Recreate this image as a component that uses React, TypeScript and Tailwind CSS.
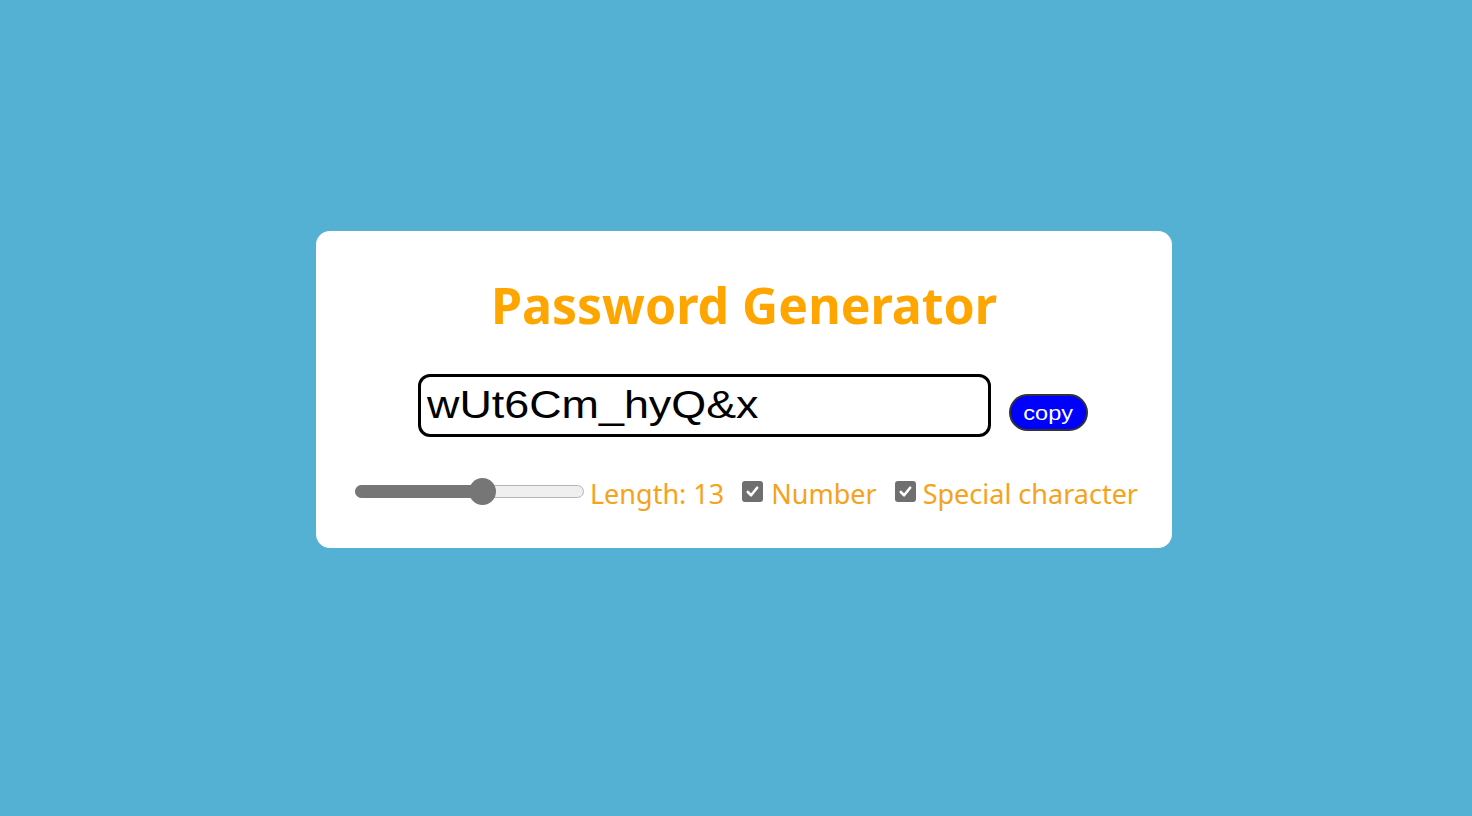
import React from "react";

function Check() {
  return (
    <span className="inline-flex h-[21px] w-[21px] items-center justify-center rounded-[3px] bg-[#6f6f6f]">
      <svg width="15" height="15" viewBox="0 0 16 16">
        <path d="M3 8.5 L6.5 12 L13 4" fill="none" stroke="white" strokeWidth="2.8" strokeLinecap="round" strokeLinejoin="round" />
      </svg>
    </span>
  );
}

export default function App() {
  return (
    <div className="min-h-[816px] w-full bg-[#54b1d3] pt-[231px] pl-[316px]">
      <div className="flex h-[317px] w-[856px] flex-col items-center rounded-[14px] bg-white">
        <h1
          className="mt-[39px] text-[50px] font-bold leading-[70px] text-[#ffa500]"
          style={{ fontFamily: '"Noto Sans", sans-serif' }}
        >
          Password Generator
        </h1>
        <div className="mt-[34px] ml-[18px] flex items-center gap-[18px]">
          <div
            className="flex h-[63px] w-[573px] items-center rounded-[12px] border-[3px] border-black pl-[6px] text-[39px] text-black"
            style={{ fontFamily: '"Liberation Sans", Arial, sans-serif' }}
          >
            <span className="inline-block origin-left scale-x-[1.15]">wUt6Cm_hyQ&amp;x</span>
          </div>
          <button
            className="mt-[14px] flex h-[37px] w-[79px] items-center justify-center rounded-full border-2 border-[#333] bg-[#0000ff] text-[21px] text-white"
            style={{ fontFamily: '"Liberation Sans", Arial, sans-serif' }}
          >
            <span className="inline-block scale-x-[1.12]">copy</span>
          </button>
        </div>
        <div
          className="mt-[36px] ml-[5px] flex items-center text-[27px] text-[#f6a21b]"
          style={{ fontFamily: '"Noto Sans", sans-serif' }}
        >
          <div className="relative mr-[6px] h-[27px] w-[229px]">
            <div className="absolute left-0 right-0 top-[7px] h-[13px] rounded-full border border-[#b5b5b5] bg-[#efefef]" />
            <div className="absolute left-0 top-[7px] h-[13px] w-[128px] rounded-full bg-[#767676]" />
            <div className="absolute left-[114px] top-0 h-[27px] w-[27px] rounded-full bg-[#767676]" />
          </div>
          <span className="pt-[6px] leading-[30px]">Length: 13</span>
          <span className="ml-[18px] mr-[8px] flex"><Check /></span>
          <span className="pt-[6px] leading-[30px]">Number</span>
          <span className="ml-[18px] mr-[7px] flex"><Check /></span>
          <span className="pt-[6px] leading-[30px]">Special character</span>
        </div>
      </div>
    </div>
  );
}
